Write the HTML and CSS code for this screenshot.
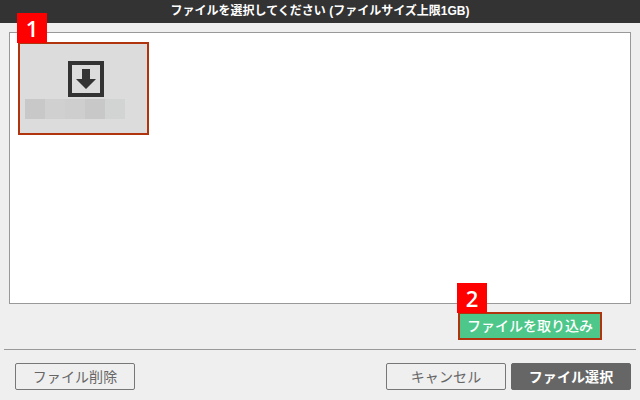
FILE: index.html
```html
<!DOCTYPE html>
<html lang="ja">
<head>
<meta charset="utf-8">
<title>ファイルを選択</title>
<link rel="stylesheet" href="styles.css">
</head>
<body>
<div class="dialog">
  <header class="title">ファイルを選択してください (ファイルサイズ上限1GB)</header>
  <main class="list">
    <div class="item">
      <span class="badge badge-one">1</span>
      <svg class="icon" width="36" height="36" viewBox="0 0 36 36" aria-hidden="true">
        <rect x="2" y="2" width="32" height="32" fill="none" stroke="#333" stroke-width="4"/>
        <path d="M14 8h8v10h6L18 28 8 18h6z" fill="#333"/>
      </svg>
      <div class="name">
        <i class="c1"></i><i class="c2"></i><i class="c3"></i><i class="c4"></i><i class="c5"></i>
      </div>
    </div>
  </main>
  <div class="import-row">
    <button class="btn-import">ファイルを取り込み<span class="badge badge-two">2</span></button>
  </div>
  <hr class="rule">
  <footer class="actions">
    <button class="btn">ファイル削除</button>
    <span class="spacer"></span>
    <button class="btn btn-cancel">キャンセル</button>
    <button class="btn btn-dark">ファイル選択</button>
  </footer>
</div>
</body>
</html>
```
FILE: styles.css
```css
* { box-sizing: border-box; }
html, body { margin: 0; height: 100%; }
body {
  background: #efefef;
  font-family: "Liberation Sans", "Noto Sans CJK JP", sans-serif;
  overflow: hidden;
}
.dialog { width: 640px; height: 400px; display: flex; flex-direction: column; }
.title {
  height: 23px;
  background: #333333;
  color: #ffffff;
  font-size: 12px;
  font-weight: bold;
  line-height: 23px;
  text-align: center;
  flex: none;
}
.list {
  margin: 9px 9px 0;
  height: 272px;
  background: #ffffff;
  border: 1px solid #999999;
  padding: 9px 8px;
  flex: none;
}
.item {
  position: relative;
  width: 131px;
  height: 93px;
  background: #dcdcdc;
  border: 2px solid #b0340e;
  display: flex;
  flex-direction: column;
  padding-top: 17px;
}
.icon { display: block; flex: none; margin-left: 48px; }
.name { display: flex; margin: 2px 0 0 5px; }
.name i { display: block; width: 20px; height: 20px; }
.c1 { background: #c8c8c8; }
.c2 { background: #d0d0d0; }
.c3 { background: #cecece; }
.c4 { background: #c8c8c9; }
.c5 { background: #d2d3d3; }
.badge {
  position: absolute;
  width: 30px;
  height: 30px;
  padding: 0;
  background: #ff0000;
  color: #ffffff;
  font-family: "Open Sans", "Liberation Sans", sans-serif;
  font-size: 22px;
  font-weight: 600;
  line-height: 30px;
  letter-spacing: 0;
  text-align: center;
}
.badge-one { left: -3px; top: -31px; }
.badge-two { left: -3px; top: -31px; }
.import-row { display: flex; justify-content: flex-end; padding: 8px 38px 0 0; flex: none; }
.btn-import {
  position: relative;
  width: 144px;
  height: 28px;
  padding: 0 0 2px;
  background: #4dc78a;
  border: 2px solid #b0340e;
  color: #ffffff;
  font-family: inherit;
  font-size: 14px;
  font-weight: 500;
  white-space: nowrap;
}
.rule { width: 632px; height: 1px; margin: 9px 4px 0; border: 0; background: #999999; flex: none; }
.actions { display: flex; gap: 5px; padding: 13px 9px 0 15px; flex: none; }
.spacer { flex: 1; }
.btn {
  width: 120px;
  height: 27px;
  padding: 0 0 2px;
  background: #efefef;
  border: 1px solid #777777;
  border-radius: 2px;
  color: #666666;
  font-family: inherit;
  font-size: 14px;
  letter-spacing: 0.1px;
}
.btn-dark { background: #666666; border-color: #666666; color: #ffffff; font-weight: bold; }
```
